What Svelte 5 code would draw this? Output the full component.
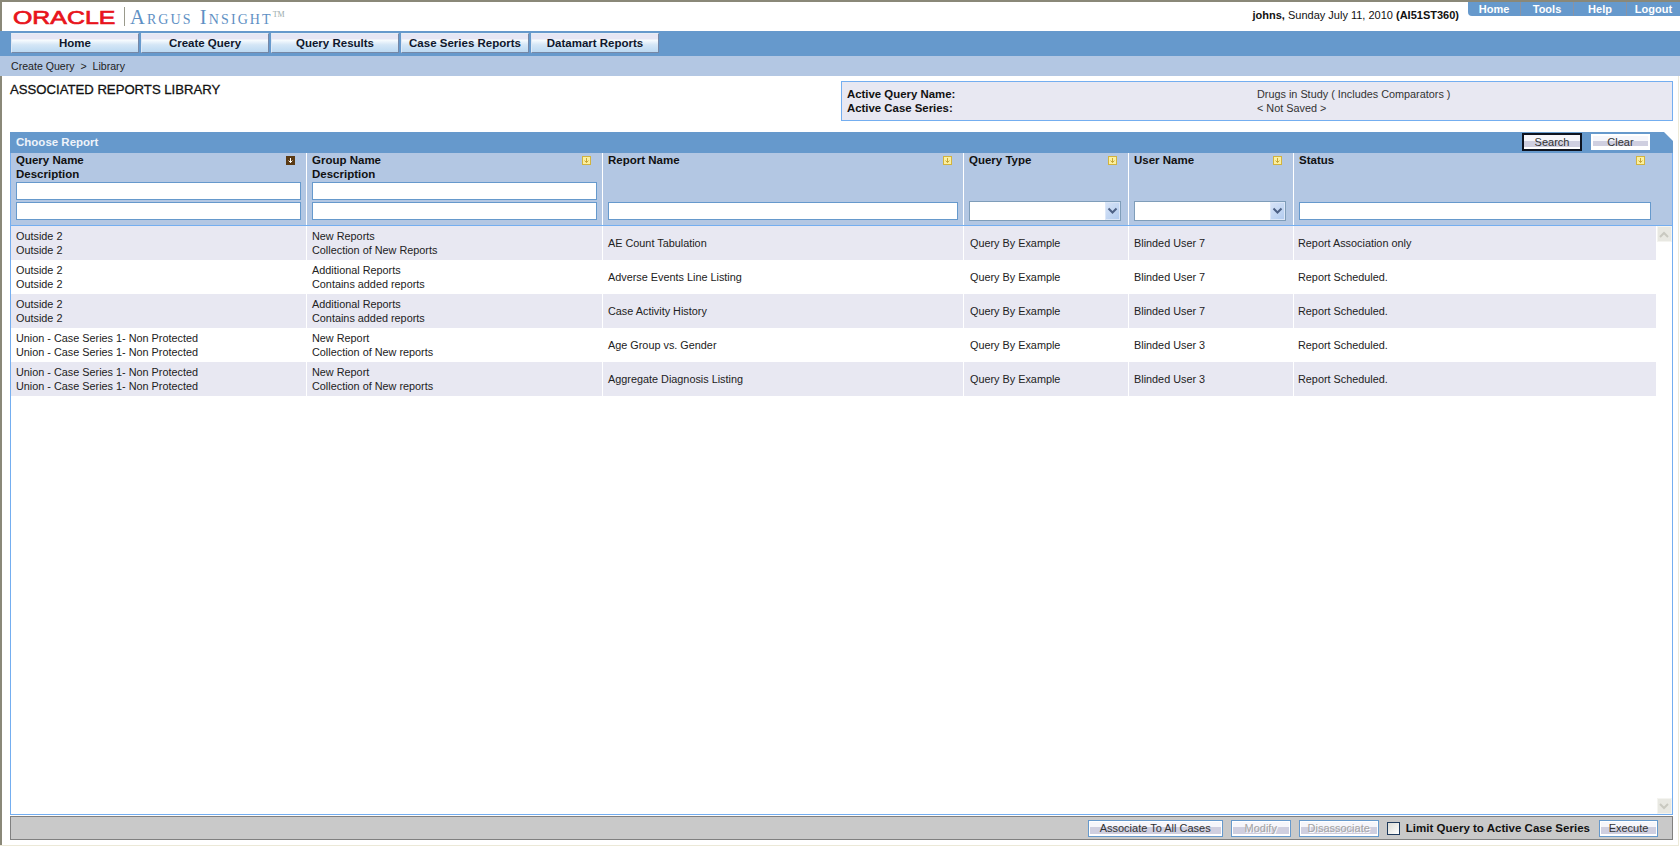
<script>
  const navItems = ['Home', 'Create Query', 'Query Results', 'Case Series Reports', 'Datamart Reports'];
  const tabs = ['Home', 'Tools', 'Help', 'Logout'];
  const rows = [
    ['Outside 2', 'Outside 2', 'New Reports', 'Collection of New Reports', 'AE Count Tabulation', 'Query By Example', 'Blinded User 7', 'Report Association only'],
    ['Outside 2', 'Outside 2', 'Additional Reports', 'Contains added reports', 'Adverse Events Line Listing', 'Query By Example', 'Blinded User 7', 'Report Scheduled.'],
    ['Outside 2', 'Outside 2', 'Additional Reports', 'Contains added reports', 'Case Activity History', 'Query By Example', 'Blinded User 7', 'Report Scheduled.'],
    ['Union - Case Series 1- Non Protected', 'Union - Case Series 1- Non Protected', 'New Report', 'Collection of New reports', 'Age Group vs. Gender', 'Query By Example', 'Blinded User 3', 'Report Scheduled.'],
    ['Union - Case Series 1- Non Protected', 'Union - Case Series 1- Non Protected', 'New Report', 'Collection of New reports', 'Aggregate Diagnosis Listing', 'Query By Example', 'Blinded User 3', 'Report Scheduled.']
  ];
</script>

{#snippet sortIcon(active)}
  <svg class="sort" width="9" height="9" viewBox="0 0 9 9">
    <rect x="0.5" y="0.5" width="8" height="8" fill={active ? '#5a3a14' : '#fbf0a0'} stroke={active ? '#5a3a14' : '#d2b33e'} />
    <path d="M4.5 2v4.5M2.6 4.6l1.9 2 1.9-2" fill="none" stroke={active ? '#fff' : '#c9a632'} stroke-width="1" />
  </svg>
{/snippet}

{#snippet fakeSelect()}
  <div class="select">
    <select aria-label="filter"></select>
    <span class="select-btn">
      <svg width="11" height="8" viewBox="0 0 11 8"><path d="M1.5 1.5l4 4 4-4" fill="none" stroke="#4d6185" stroke-width="2" /></svg>
    </span>
  </div>
{/snippet}

<div class="frame">
  <header class="top">
    <div class="logo">
      <span class="oracle"><span class="oracle-word">ORACLE</span></span>
      <span class="logo-sep"></span>
      <span class="argus">Argus Insight<sup>TM</sup></span>
    </div>
    <div class="top-right">
      <div class="user"><b>johns,</b> Sunday July 11, 2010 <b>(AI51ST360)</b></div>
      <nav class="tabs">
        {#each tabs as t}
          <span class="tab">{t}</span>
        {/each}
      </nav>
    </div>
  </header>

  <nav class="nav">
    {#each navItems as n}
      <button class="nav-btn">{n}</button>
    {/each}
  </nav>

  <div class="crumb">Create Query &nbsp;&gt;&nbsp; Library</div>

  <main class="body">
    <section class="intro">
      <h1>ASSOCIATED REPORTS LIBRARY</h1>
      <div class="info">
        <div class="info-row"><b>Active Query Name:</b><span>Drugs in Study ( Includes Comparators )</span></div>
        <div class="info-row"><b>Active Case Series:</b><span>&lt; Not Saved &gt;</span></div>
      </div>
    </section>

    <section class="panel">
      <div class="panel-head">
        <span class="panel-title">Choose Report</span>
        <div class="panel-actions">
          <button class="btn search">Search</button>
          <button class="btn clear">Clear</button>
        </div>
      </div>

      <div class="cols head">
        <div class="hcell">
          <div class="hline"><span>Query Name</span>{@render sortIcon(true)}</div>
          <div class="hline"><span>Description</span></div>
          <div class="filters"><input aria-label="Query Name" /><input aria-label="Description" /></div>
        </div>
        <div class="hcell">
          <div class="hline"><span>Group Name</span>{@render sortIcon(false)}</div>
          <div class="hline"><span>Description</span></div>
          <div class="filters"><input aria-label="Group Name" /><input aria-label="Group Description" /></div>
        </div>
        <div class="hcell">
          <div class="hline"><span>Report Name</span>{@render sortIcon(false)}</div>
          <div class="filters"><input aria-label="Report Name" /></div>
        </div>
        <div class="hcell">
          <div class="hline"><span>Query Type</span>{@render sortIcon(false)}</div>
          <div class="filters sel">{@render fakeSelect()}</div>
        </div>
        <div class="hcell">
          <div class="hline"><span>User Name</span>{@render sortIcon(false)}</div>
          <div class="filters sel">{@render fakeSelect()}</div>
        </div>
        <div class="hcell last">
          <div class="hline"><span>Status</span>{@render sortIcon(false)}</div>
          <div class="filters"><input aria-label="Status" /></div>
        </div>
      </div>

      <div class="table-body">
        <div class="list">
          {#each rows as r, i}
            <div class="cols row" class:alt={i % 2 === 0}>
              <div class="cell"><div>{r[0]}</div><div>{r[1]}</div></div>
              <div class="cell"><div>{r[2]}</div><div>{r[3]}</div></div>
              <div class="cell">{r[4]}</div>
              <div class="cell">{r[5]}</div>
              <div class="cell">{r[6]}</div>
              <div class="cell">{r[7]}</div>
            </div>
          {/each}
        </div>
        <div class="scrollbar">
          <span class="sb-btn"><svg width="10" height="7" viewBox="0 0 10 7"><path d="M1 6l4-4 4 4" fill="none" stroke="#c9c9c0" stroke-width="2" /></svg></span>
          <span class="sb-btn"><svg width="10" height="7" viewBox="0 0 10 7"><path d="M1 1l4 4 4-4" fill="none" stroke="#c9c9c0" stroke-width="2" /></svg></span>
        </div>
      </div>
    </section>

    <footer class="bar">
      <button class="btn">Associate To All Cases</button>
      <button class="btn disabled m">Modify</button>
      <button class="btn disabled d">Disassociate</button>
      <label class="limit"><span class="check"></span>Limit Query to Active Case Series</label>
      <button class="btn exec">Execute</button>
    </footer>
  </main>
</div>

<style>
  :global(body) {
    margin: 0;
    background: #fff;
    overflow: hidden;
  }
  .frame {
    box-sizing: border-box;
    width: 1680px;
    height: 846px;
    border-top: 2px solid #8a8878;
    border-left: 2px solid #8a8878;
    font-family: "Liberation Sans", Arial, sans-serif;
    font-size: 10.85px;
    color: #222;
    display: flex;
    flex-direction: column;
  }
  button, input, select {
    font-family: inherit;
  }

  .top {
    height: 29px;
    display: flex;
    justify-content: space-between;
    flex: none;
  }
  .logo {
    display: flex;
    align-items: flex-start;
    padding-left: 11px;
  }
  .oracle {
    display: block;
    width: 105px;
    margin-top: 6px;
    height: 20px;
    color: #e8141c;
    font-size: 19px;
    line-height: 20px;
    font-weight: 400;
    -webkit-text-stroke: 0.7px #e8141c;
  }
  .oracle-word {
    display: inline-block;
    transform: scaleX(1.31);
    transform-origin: left center;
  }
  .logo-sep {
    width: 1px;
    height: 19px;
    margin: 5px 5px 0 6px;
    background: #9a9a8c;
  }
  .argus {
    font-family: "Liberation Serif", serif;
    font-variant: small-caps;
    font-size: 20.5px;
    line-height: 22px;
    margin-top: 4px;
    letter-spacing: 2.1px;
    color: #5e90c4;
    white-space: nowrap;
  }
  .argus sup {
    font-size: 8px;
    line-height: 0;
    letter-spacing: 0;
    color: #9aa;
    font-variant: normal;
    vertical-align: 7px;
  }
  .top-right {
    display: flex;
    align-items: flex-start;
  }
  .user {
    font-size: 11px;
    line-height: 14px;
    margin: 6px 9px 0 0;
    color: #111;
  }
  .tabs {
    display: flex;
    height: 14px;
  }
  .tab {
    width: 52px;
    height: 14px;
    background: #6699cc;
    border-right: 1px solid #8a93a3;
    color: #fff;
    font-weight: 700;
    font-size: 11px;
    line-height: 14px;
    text-align: center;
  }
  .tab:first-child {
    border-bottom-left-radius: 4px;
  }
  .tab:last-child {
    border-right: 0;
    width: 53px;
  }

  .nav {
    flex: none;
    height: 25px;
    margin-left: -2px;
    background: #6699cc;
    display: flex;
    gap: 2px;
    padding: 2px 0 0 11px;
    box-sizing: border-box;
  }
  .nav-btn {
    box-sizing: border-box;
    width: 128px;
    height: 20px;
    padding: 0;
    border: 1px solid #7688a6;
    border-top-color: #e8eef6;
    border-left-color: #dfe8f4;
    background: linear-gradient(#e6e6f4 0 25%, #f6fbfe 35%, #d4e6f6 60%, #bcd9f2 100%);
    color: #10182c;
    font-size: 11.5px;
    font-weight: 700;
  }
  .crumb {
    flex: none;
    margin-left: -2px;
    height: 20px;
    line-height: 20px;
    padding-left: 11px;
    background: #b3c7e3;
    color: #222;
    font-size: 10.6px;
  }

  .body {
    flex: 1;
    min-height: 0;
    display: flex;
    flex-direction: column;
    padding: 0 5px 5px 10px;
    margin: 0 1px 0 -2px;
    border-right: 1px solid #ece9d8;
    border-bottom: 1px solid #ece9d8;
  }
  .intro {
    flex: none;
    height: 56px;
    display: flex;
    justify-content: space-between;
    align-items: flex-start;
  }
  h1 {
    margin: 6px 0 0 0;
    font-size: 13.15px;
    line-height: 15px;
    font-weight: 400;
    -webkit-text-stroke: 0.3px #111;
    color: #111;
  }
  .info {
    box-sizing: border-box;
    width: 832px;
    height: 40px;
    margin-top: 5px;
    padding: 5px 5px;
    background: #e8e8f2;
    border: 1px solid #74aef0;
  }
  .info-row {
    display: flex;
    height: 14px;
    line-height: 14px;
    color: #333;
  }
  .info-row b {
    width: 410px;
    color: #111;
    font-size: 11.4px;
  }

  .panel {
    flex: 1;
    min-height: 0;
    display: flex;
    flex-direction: column;
  }
  .panel-head {
    flex: none;
    height: 21px;
    background: #6699cc;
    display: flex;
    justify-content: space-between;
    clip-path: polygon(0 0, calc(100% - 9px) 0, 100% 9px, 100% 100%, 0 100%);
    padding: 0 23px 0 6px;
    box-sizing: border-box;
  }
  .panel-title {
    color: #eef3fa;
    font-weight: 700;
    font-size: 11.5px;
    line-height: 20px;
  }
  .panel-actions {
    display: flex;
    gap: 9px;
    align-items: center;
    height: 19px;
  }
  .btn {
    box-sizing: border-box;
    height: 18px;
    padding: 0;
    border: 1px solid #6699cc;
    outline: 1px solid #fff;
    outline-offset: -2px;
    background: linear-gradient(#f6f6fb 0 40%, #cfcfe0 40% 85%, #fff 85%);
    color: #333;
    font-size: 11px;
  }
  .search {
    width: 60px;
    height: 18px;
    border: 2px solid #0d1320;
    outline: 0;
  }
  .clear {
    width: 59px;
    height: 16px;
    border: 2px solid #fff;
    outline: 0;
  }

  .cols {
    display: grid;
    grid-template-columns: 296px 296px 361px 165px 165px 1fr;
  }
  .head {
    flex: none;
    box-sizing: border-box;
    height: 73px;
    background: #b3c7e3;
    border-left: 1px solid #74aef0;
    border-right: 1px solid #74aef0;
    border-bottom: 1px solid #74aef0;
  }
  .hcell {
    display: flex;
    flex-direction: column;
    padding: 0 5px;
    border-right: 1px solid #fff;
    color: #111;
    font-weight: 700;
    font-size: 11.5px;
    height: 72px;
    box-sizing: border-box;
  }
  .hcell.last {
    border-right: 0;
    padding-right: 21px;
  }
  .hline {
    display: flex;
    justify-content: space-between;
    align-items: center;
    height: 14px;
  }
  .sort {
    margin-right: 6px;
    flex: none;
  }
  .filters {
    margin-top: auto;
    padding-bottom: 5px;
    display: flex;
    flex-direction: column;
    gap: 2px;
  }
  .filters.sel {
    padding-bottom: 4px;
    padding-right: 2px;
  }
  input {
    box-sizing: border-box;
    display: block;
    width: 100%;
    height: 18px;
    padding: 0 2px;
    margin: 0;
    border: 1px solid #6699cc;
    background: #fff;
    border-radius: 0;
    outline: 0;
  }
  .select {
    position: relative;
    height: 20px;
  }
  select {
    box-sizing: border-box;
    display: block;
    width: 100%;
    height: 20px;
    border: 1px solid #7f9db9;
    background: #fff;
    appearance: none;
    border-radius: 0;
  }
  .select-btn {
    position: absolute;
    right: 1px;
    top: 1px;
    width: 15px;
    height: 18px;
    background: linear-gradient(135deg, #d6e3f7, #b3ccef);
    border: 1px solid #dce7f8;
    box-sizing: border-box;
    display: flex;
    align-items: center;
    justify-content: center;
  }

  .table-body {
    flex: 1;
    min-height: 0;
    display: flex;
    border: 1px solid #74aef0;
    border-top: 0;
  }
  .list {
    flex: 1;
    min-width: 0;
  }
  .row {
    height: 34px;
    align-items: stretch;
    background: #fff;
  }
  .row.alt {
    background: #e8e8f2;
  }
  .cell {
    display: flex;
    flex-direction: column;
    justify-content: center;
    padding-left: 5px;
    border-right: 1px solid #fff;
    line-height: 14px;
    color: #222;
    white-space: nowrap;
  }
  .cell:nth-child(4) {
    padding-left: 6px;
  }
  .cell:last-child {
    border-right: 0;
    padding-left: 4px;
  }
  .scrollbar {
    flex: none;
    width: 16px;
    display: flex;
    flex-direction: column;
    justify-content: space-between;
    align-items: center;
    background: #fff;
  }
  .sb-btn {
    width: 15px;
    height: 16px;
    background: #e8e8e2;
    border: 1px solid #f4f4f0;
    box-sizing: border-box;
    display: flex;
    align-items: center;
    justify-content: center;
  }

  .bar {
    flex: none;
    box-sizing: border-box;
    height: 24px;
    margin-top: 1px;
    background: #c9c9c9;
    border: 1px solid #808080;
    display: flex;
    align-items: center;
    justify-content: flex-end;
    padding-right: 14px;
    gap: 8px;
  }
  .bar .btn {
    width: 135px;
    height: 17px;
  }
  .bar .m {
    width: 60px;
  }
  .bar .d {
    width: 80px;
  }
  .bar .exec {
    width: 59px;
  }
  .disabled {
    color: #a4a4a4;
    text-shadow: 1px 1px 0 #fff;
  }
  .limit {
    display: flex;
    align-items: center;
    gap: 6px;
    font-weight: 700;
    color: #111;
    font-size: 11.5px;
    margin-right: 1px;
    letter-spacing: 0.02px;
  }
  .check {
    box-sizing: border-box;
    width: 13px;
    height: 13px;
    border: 1px solid #1f3a5c;
    background: linear-gradient(135deg, #dcdcd6, #fff);
  }
</style>
